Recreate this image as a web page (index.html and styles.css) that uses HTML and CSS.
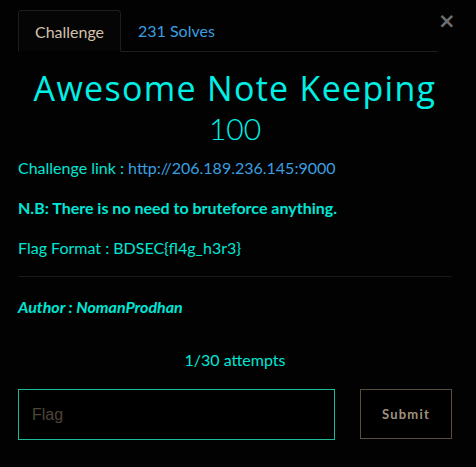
FILE: index.html
```html
<!DOCTYPE html>
<html>
<head>
<meta charset="utf-8">
<link rel="stylesheet" href="styles.css">
</head>
<body>
<div class="modal">
  <div class="header">
    <nav class="tabs">
      <span class="tab active">Challenge</span>
      <span class="tab link">231 Solves</span>
    </nav>
    <span class="close">&times;</span>
  </div>
  <h1 class="title">Awesome Note Keeping</h1>
  <div class="points">100</div>
  <div class="desc">
    <p>Challenge link : <a class="url">http://206.189.236.145:9000</a></p>
    <p><strong>N.B: There is no need to bruteforce anything.</strong></p>
    <p>Flag Format : BDSEC{fl4g_h3r3}</p>
  </div>
  <hr class="sep">
  <p class="author">Author : NomanProdhan</p>
  <div class="attempts">1/30 attempts</div>
  <div class="form">
    <input class="flag" type="text" placeholder="Flag">
    <button class="submit">Submit</button>
  </div>
</div>
</body>
</html>
```
FILE: styles.css
```css
html, body {
  margin: 0;
  padding: 0;
  background: #000;
}
.modal {
  width: 476px;
  height: 467px;
  box-sizing: border-box;
  padding: 10px 24px 0 18px;
  font-family: Lato, "Liberation Sans", sans-serif;
  font-size: 16px;
  color: #00e6d6;
  background: #020202;
}
.header {
  display: flex;
  align-items: flex-start;
}
.tabs {
  flex: 1;
  display: flex;
  border-bottom: 1px solid #1e1e1e;
  height: 41px;
}
.tab {
  display: flex;
  align-items: center;
  padding: 0 17px;
  height: 41px;
  box-sizing: border-box;
  font-size: 16px;
}
.tab.active {
  border: 1px solid #1e1e1e;
  border-bottom-color: #020202;
  border-radius: 4px 4px 0 0;
  color: #d4c2a8;
  background: #050505;
  height: 42px;
  width: 103px;
  justify-content: center;
}
.tab.link {
  color: #3a9fe0;
}
.close {
  width: 14px;
  margin-top: 1px;
  text-align: right;
  font-family: "DejaVu Sans", sans-serif;
  font-weight: bold;
  font-size: 21px;
  line-height: 21px;
  color: #6e6e6e;
}
.title {
  margin: 16px 0 0;
  text-align: center;
  font-family: "Open Sans", sans-serif;
  font-weight: 400;
  font-size: 34px;
  line-height: 40px;
  letter-spacing: 1.3px;
  color: #00f0e6;
}
.points {
  margin-top: 2px;
  text-align: center;
  font-weight: 300;
  font-size: 30px;
  line-height: 36px;
  color: #00f0e6;
}
.desc p {
  margin: 0;
  line-height: 40px;
}
.desc {
  margin-top: 2px;
}
.url {
  color: #3a9fe0;
}
.sep {
  border: 0;
  border-top: 1px solid #1a1a1a;
  margin: 8px 0 0;
}
.author {
  margin: 14px 0 0;
  font-weight: bold;
  font-style: italic;
  line-height: 32px;
}
.attempts {
  text-align: center;
  margin-top: 27px;
  line-height: 20px;
}
.form {
  display: flex;
  margin-top: 19px;
  gap: 25px;
}
.flag {
  width: 317px;
  height: 51px;
  box-sizing: border-box;
  background: #000;
  border: 1px solid #1abc9c;
  padding: 0 13px;
  font-family: "Liberation Sans", Arial, sans-serif;
  font-size: 16px;
  color: #ccc;
  outline: none;
}
.flag::placeholder {
  color: #4d4538;
}
.submit {
  width: 92px;
  height: 50px;
  box-sizing: border-box;
  background: #000;
  border: 1px solid #5a4d40;
  font-family: Lato, sans-serif;
  font-weight: bold;
  font-size: 13px;
  letter-spacing: 1.2px;
  color: #a0917f;
}
```
